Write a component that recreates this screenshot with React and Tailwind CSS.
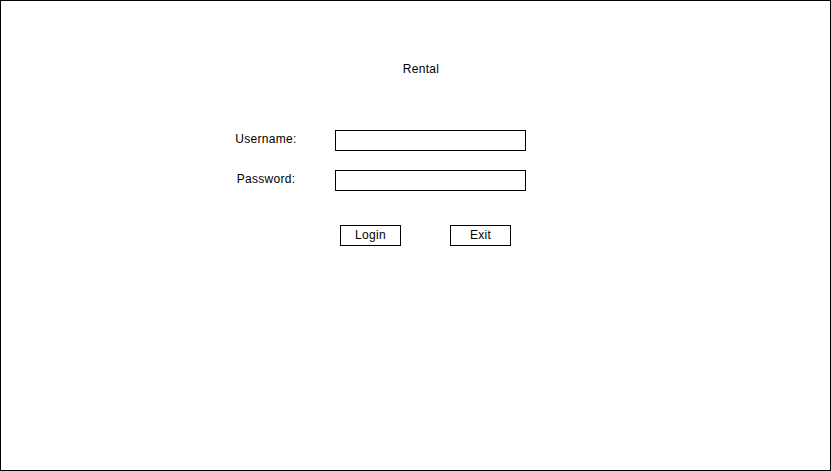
import React from "react";

const App = () => {
    return (
        <div
            className="w-[831px] h-[471px] box-border border border-black bg-white text-black text-[12px] leading-[14px] tracking-[0.3px]"
            style={{ fontFamily: '"Liberation Sans", Arial, sans-serif' }}
        >
            {/* Title */}
            <div className="mt-[61px] ml-[380px] w-[80px] text-center">Rental</div>

            {/* Form */}
            <div className="mt-[54px] flex flex-col gap-[19px]">
                <div className="flex items-start">
                    <label className="ml-[225px] w-[80px] pt-[2px] text-center">Username:</label>
                    <input
                        type="text"
                        className="ml-[29px] w-[191px] h-[21px] box-border border border-black bg-white outline-none px-1"
                    />
                </div>
                <div className="flex items-start">
                    <label className="ml-[225px] w-[80px] pt-[2px] text-center">Password:</label>
                    <input
                        type="password"
                        className="ml-[29px] w-[191px] h-[21px] box-border border border-black bg-white outline-none px-1"
                    />
                </div>
            </div>

            {/* Buttons */}
            <div className="mt-[34px] ml-[339px] flex items-start">
                <button className="w-[61px] h-[21px] box-border border border-black bg-white pb-[2px] text-center leading-[14px]">
                    Login
                </button>
                <button className="ml-[49px] w-[61px] h-[21px] box-border border border-black bg-white pb-[2px] text-center leading-[14px]">
                    Exit
                </button>
            </div>
        </div>
    );
};

export default App;
